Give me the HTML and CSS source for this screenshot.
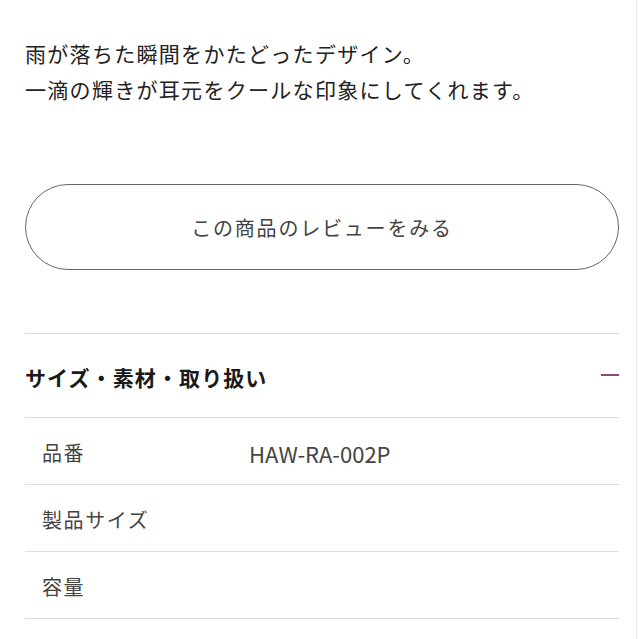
FILE: index.html
```html
<!DOCTYPE html>
<html lang="ja">
<head>
    <meta charset="UTF-8">
    <meta name="viewport" content="width=device-width, initial-scale=1.0">
    <title>商品詳細</title>
    <link rel="stylesheet" href="styles.css">
</head>
<body>
    <div class="page">
        <p class="description">雨が落ちた瞬間をかたどったデザイン。<br>一滴の輝きが耳元をクールな印象にしてくれます。</p>

        <a class="review-button" href="#">この商品のレビューをみる</a>

        <div class="spec">
            <div class="spec-header">
                <h2>サイズ・素材・取り扱い</h2>
                <span class="toggle"></span>
            </div>
            <div class="spec-row">
                <div class="spec-label">品番</div>
                <div class="spec-value">HAW-RA-002P</div>
            </div>
            <div class="spec-row">
                <div class="spec-label">製品サイズ</div>
                <div class="spec-value"></div>
            </div>
            <div class="spec-row">
                <div class="spec-label">容量</div>
                <div class="spec-value"></div>
            </div>
        </div>
    </div>
</body>
</html>
```

FILE: styles.css
```css
html, body {
    margin: 0;
    padding: 0;
    background-color: #fff;
}
body {
    font-family: "Noto Sans CJK JP", "Noto Sans", sans-serif;
    color: #222;
    border-right: 1px solid #ececec;
    width: 637px;
    min-height: 639px;
    box-sizing: border-box;
}
.page {
    padding: 35px 17px 0 25px;
}
.description {
    margin: 0;
    font-size: 21px;
    line-height: 36px;
    letter-spacing: 1.3px;
    color: #222;
}
.review-button {
    display: flex;
    align-items: center;
    justify-content: center;
    height: 86px;
    box-sizing: border-box;
    margin-top: 77px;
    border: 1px solid #666;
    border-radius: 43px;
    font-size: 20px;
    letter-spacing: 1.8px;
    color: #444;
    text-decoration: none;
}
.spec {
    margin-top: 63px;
    border-top: 1px solid #ddd;
}
.spec-header {
    display: flex;
    align-items: center;
    justify-content: space-between;
    height: 84px;
    padding-top: 2px;
    box-sizing: border-box;
    border-bottom: 1px solid #ddd;
}
.spec-header h2 {
    margin: 0;
    font-size: 21px;
    font-weight: bold;
    letter-spacing: 1.1px;
    color: #1a1a1a;
}
.toggle {
    width: 18px;
    height: 2px;
    margin-top: -4px;
    background-color: #8b4a7d;
}
.spec-row {
    display: flex;
    align-items: center;
    height: 67px;
    padding-left: 17px;
    padding-top: 3px;
    box-sizing: border-box;
    border-bottom: 1px solid #ddd;
    font-size: 20px;
    color: #444;
}
.spec-label {
    width: 207px;
    letter-spacing: 1.6px;
}
.spec-value {
    font-size: 22px;
    letter-spacing: 0;
}
```
